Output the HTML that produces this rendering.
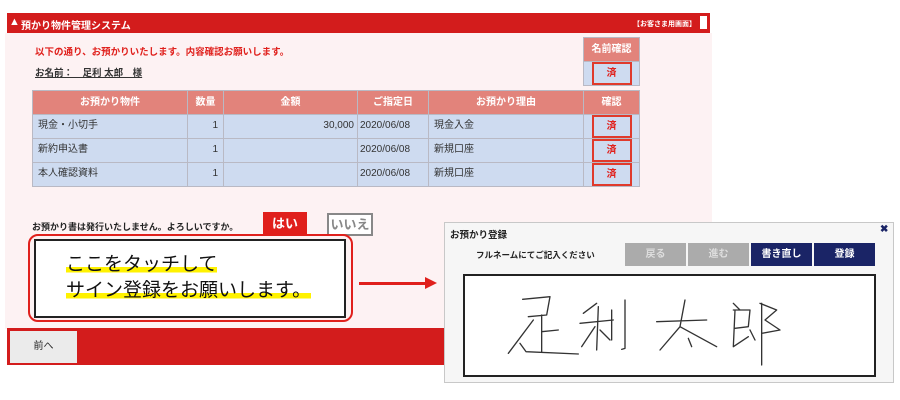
<!DOCTYPE html>
<html><head><meta charset="utf-8"><style>
*{margin:0;padding:0;box-sizing:border-box}
body{width:900px;height:400px;background:#fff;position:relative;overflow:hidden;font-family:"Liberation Sans","Noto Sans CJK JP",sans-serif}
.a{position:absolute}
.main{left:5px;top:33px;width:707px;height:296px;background:#fdf2f3}
.hdr{left:7px;top:13px;width:703px;height:20px;background:#d31c1c;color:#fff;font-size:10px;font-weight:bold}
table{position:absolute;border-collapse:collapse;font-size:10px;color:#333}
td,th{border:1px solid #b9b9c4;height:24px;line-height:14px;vertical-align:middle;padding-top:0;padding-bottom:0}
th{background:#e2837b;color:#fff;font-weight:bold}
td{background:#cedbf0}
td span.t{display:inline-block;height:14px;line-height:14px;vertical-align:middle}
.r{text-align:right;padding-right:5px}
.l{padding-left:5px}
.sumi{display:block;margin:0 auto;width:40px;height:23px;border:2px solid #e03a2c;color:#e0201c;font-weight:bold;text-align:center;line-height:19px;font-size:10px}
.btn{top:243px;width:61px;height:23px;color:#fff;font-size:10px;font-weight:bold;text-align:center;line-height:23px}
.hl{background:linear-gradient(transparent 62%,#fff200 62%,#fff200 88%,transparent 88%)}
</style></head><body>
<div class="a hdr"><span style="position:absolute;left:2px;top:3px;font-size:11px">▲</span><span style="position:absolute;left:14px;top:4px">預かり物件管理システム</span><span style="position:absolute;right:14px;top:6px;font-size:7px">【お客さま用画面】</span><span style="position:absolute;right:3px;top:3px;width:7px;height:13px;background:#fff"></span></div>
<div class="a main"></div>
<div class="a" style="left:35px;top:44px;font-size:9.5px;font-weight:bold;color:#e0201c">以下の通り、お預かりいたします。内容確認お願いします。</div>
<div class="a" style="left:35px;top:65px;font-size:9.5px;font-weight:bold;color:#333;text-decoration:underline">お名前：　足利 太郎　様</div>
<table style="left:583px;top:37px;width:57px"><tr><th style="height:24px">名前確認</th></tr><tr><td><span class="sumi">済</span></td></tr></table>
<table style="left:32px;top:90px;width:608px">
<tr><th style="width:155px">お預かり物件</th><th style="width:36px">数量</th><th style="width:134px">金額</th><th style="width:71px">ご指定日</th><th style="width:155px">お預かり理由</th><th>確認</th></tr>
<tr><td class="l"><span class="t">現金・小切手</span></td><td class="r"><span class="t">1</span></td><td class="r" style="padding-right:3px"><span class="t">30,000</span></td><td class="l" style="padding-left:2px"><span class="t">2020/06/08</span></td><td class="l"><span class="t">現金入金</span></td><td><span class="sumi">済</span></td></tr>
<tr><td class="l"><span class="t">新約申込書</span></td><td class="r"><span class="t">1</span></td><td></td><td class="l" style="padding-left:2px"><span class="t">2020/06/08</span></td><td class="l"><span class="t">新規口座</span></td><td><span class="sumi">済</span></td></tr>
<tr><td class="l"><span class="t">本人確認資料</span></td><td class="r"><span class="t">1</span></td><td></td><td class="l" style="padding-left:2px"><span class="t">2020/06/08</span></td><td class="l"><span class="t">新規口座</span></td><td><span class="sumi">済</span></td></tr>
</table>
<div class="a" style="left:32px;top:220px;font-size:9px;font-weight:bold;color:#222">お預かり書は発行いたしません。よろしいですか。</div>
<div class="a" style="left:263px;top:212px;width:44px;height:24px;background:#e0201c;color:#fff;font-weight:bold;font-size:13px;text-align:center;line-height:23px">はい</div>
<div class="a" style="left:327px;top:213px;width:46px;height:23px;border:2px solid #888;color:#888;font-weight:bold;font-size:13px;text-align:center;line-height:19px;background:#fff">いいえ</div>
<div class="a" style="left:28px;top:234px;width:325px;height:88px;border:2px solid #e0201c;border-radius:10px"></div>
<div class="a" style="left:34px;top:239px;width:312px;height:79px;border:2px solid #222;background:#fff"></div>
<div class="a" style="left:66px;top:252px;font-size:19px;line-height:26px;color:#111"><span class="hl">ここをタッチして</span><br><span class="hl">サイン登録をお願いします。</span></div>
<div class="a" style="left:359px;top:282px;width:68px;height:3px;background:#e0201c"></div>
<div class="a" style="left:425px;top:277px;width:0;height:0;border-left:12px solid #e0201c;border-top:6px solid transparent;border-bottom:6px solid transparent"></div>
<div class="a" style="left:7px;top:328px;width:440px;height:37px;background:#d31c1c"></div>
<div class="a" style="left:10px;top:331px;width:67px;height:32px;background:#ebebeb;font-size:10px;text-align:center;line-height:32px;color:#222">前へ</div>
<div class="a" style="left:444px;top:222px;width:450px;height:161px;background:#f6f6f6;border:1px solid #c8c8c8"></div>
<div class="a" style="left:450px;top:227px;font-size:9.5px;font-weight:bold;color:#222">お預かり登録</div>
<div class="a" style="left:880px;top:224px;font-size:10px;font-weight:bold;color:#1a2466">✖</div>
<div class="a" style="left:476px;top:249px;font-size:8.5px;font-weight:bold;color:#222">フルネームにてご記入ください</div>
<div class="a btn" style="left:625px;background:#ababab;color:#ddd">戻る</div>
<div class="a btn" style="left:688px;background:#ababab;color:#ddd">進む</div>
<div class="a btn" style="left:751px;background:#1a2466">書き直し</div>
<div class="a btn" style="left:814px;background:#1a2466">登録</div>
<div class="a" style="left:463px;top:274px;width:413px;height:103px;border:2px solid #222;background:#fff"></div>
<svg class="a" style="left:440px;top:200px" width="460" height="200" viewBox="0 0 1380 600" fill="none" stroke="#333" stroke-width="4" stroke-linecap="round" stroke-linejoin="round">
<path d="M248 298L330 290L320 345L265 350M305 345L305 455M305 395L355 390M280 360L205 460M240 430L258 455L415 462"/>
<path d="M470 310L430 340M420 370L520 360M475 320L470 450M465 380L425 440M480 390L510 420M515 330L515 420M555 300L555 445L545 448"/>
<path d="M650 365L800 360M735 300L720 380L660 450M720 380L830 440M745 415L755 440"/>
<path d="M880 310L900 330M880 330L930 330L925 380L885 385M885 330L880 440L925 410M930 390L945 420M960 310L1010 330L975 360L1020 390L965 400M965 310L965 495"/>
</svg>
</body></html>
